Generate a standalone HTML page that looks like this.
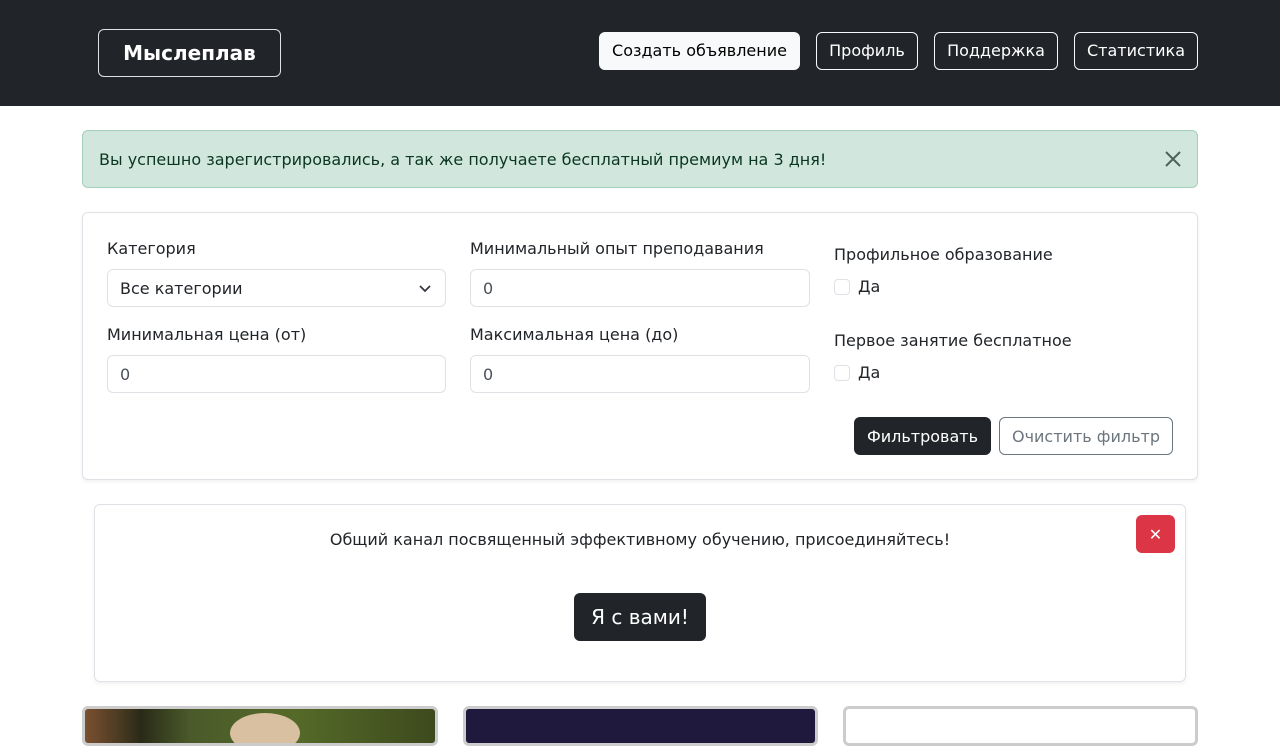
<!DOCTYPE html>
<html><head><meta charset="utf-8"><style>
*{box-sizing:border-box;margin:0;padding:0}
body{width:1280px;height:720px;overflow:hidden;background:#fff;font-family:"DejaVu Sans","Liberation Sans",sans-serif;font-size:16px;color:#212529;position:relative}
.abs{position:absolute}
.nav{left:0;top:0;width:1280px;height:106px;background:#212529}
.brand{left:98px;top:29px;width:183px;height:48px;border:1px solid #dee2e6;border-radius:6px;color:#fff;font-weight:bold;font-size:20px;display:flex;align-items:center;justify-content:center}
.nb{top:32px;height:38px;border:1px solid #f8f9fa;border-radius:6px;color:#fff;display:flex;align-items:center;justify-content:center;font-size:16px;padding-bottom:2px}
.alert{left:82px;top:130px;width:1116px;height:58px;background:#d1e7dd;border:1px solid #a3cfbb;border-radius:6px;color:#0a3622;padding:0 16px;display:flex;align-items:center}
.card{border:1px solid #dee2e6;border-radius:6px;box-shadow:0 2px 4px rgba(0,0,0,.06)}
.lbl{font-size:16px}
.inp{height:38px;border:1px solid #dee2e6;border-radius:6px;padding:0 12px;display:flex;align-items:center;color:#495057}
.cb{width:16px;height:16px;border:1px solid #dee2e6;border-radius:4px}
.btn{border-radius:6px;display:flex;align-items:center;justify-content:center}
</style></head><body>
<div class="abs nav"></div>
<div class="abs brand">Мыслеплав</div>
<div class="abs nb" style="left:599px;width:201px;background:#f8f9fa;color:#000">Создать объявление</div>
<div class="abs nb" style="left:816px;width:102px">Профиль</div>
<div class="abs nb" style="left:934px;width:124px">Поддержка</div>
<div class="abs nb" style="left:1074px;width:124px">Статистика</div>

<div class="abs alert">Вы успешно зарегистрировались, а так же получаете бесплатный премиум на 3 дня!</div>
<svg class="abs" style="left:1164px;top:150px" width="18" height="18" viewBox="0 0 18 18"><path d="M2 2L16 16M16 2L2 16" stroke="#50605a" stroke-width="2"/></svg>

<div class="abs card" style="left:82px;top:212px;width:1116px;height:268px"></div>
<div class="abs lbl" style="left:107px;top:239px">Категория</div>
<div class="abs inp" style="left:107px;top:269px;width:339px;color:#212529">Все категории</div>
<svg class="abs" style="left:418px;top:282px" width="14" height="12" viewBox="0 0 14 12"><path d="M2 4l5 5 5-5" fill="none" stroke="#343a40" stroke-width="1.8"/></svg>
<div class="abs lbl" style="left:470px;top:239px">Минимальный опыт преподавания</div>
<div class="abs inp" style="left:470px;top:269px;width:340px">0</div>
<div class="abs lbl" style="left:107px;top:325px">Минимальная цена (от)</div>
<div class="abs inp" style="left:107px;top:355px;width:339px">0</div>
<div class="abs lbl" style="left:470px;top:325px">Максимальная цена (до)</div>
<div class="abs inp" style="left:470px;top:355px;width:340px">0</div>
<div class="abs lbl" style="left:834px;top:245px">Профильное образование</div>
<div class="abs cb" style="left:834px;top:279px"></div>
<div class="abs" style="left:858px;top:277px">Да</div>
<div class="abs lbl" style="left:834px;top:331px">Первое занятие бесплатное</div>
<div class="abs cb" style="left:834px;top:365px"></div>
<div class="abs" style="left:858px;top:363px">Да</div>
<div class="abs btn" style="left:854px;top:417px;width:137px;height:38px;background:#212529;color:#fff">Фильтровать</div>
<div class="abs btn" style="left:999px;top:417px;width:174px;height:38px;border:1px solid #6c757d;color:#6c757d">Очистить фильтр</div>

<div class="abs card" style="left:94px;top:504px;width:1092px;height:178px"></div>
<div class="abs" style="left:94px;top:530px;width:1092px;text-align:center">Общий канал посвященный эффективному обучению, присоединяйтесь!</div>
<div class="abs btn" style="left:1136px;top:515px;width:39px;height:38px;background:#dc3545;color:#fff;font-size:16px">✕</div>
<div class="abs btn" style="left:574px;top:593px;width:132px;height:48px;background:#212529;color:#fff;font-size:20px">Я с вами!</div>

<div class="abs" style="left:82px;top:706px;width:356px;height:40px;border:3px solid #ccc;border-radius:6px;overflow:hidden;background:linear-gradient(90deg,#7a5030,#4a3a22 10%,#2a2a18 16%,#4a5a2a 30%,#556a28 60%,#3d4a1e 100%)">
<div style="position:absolute;left:145px;top:4px;width:70px;height:40px;border-radius:50%;background:#d8c0a0"></div></div>
<div class="abs" style="left:463px;top:706px;width:355px;height:40px;border:3px solid #ccc;border-radius:6px;background:#1f1a3d"></div>
<div class="abs" style="left:843px;top:706px;width:355px;height:40px;border:3px solid #ccc;border-radius:6px;background:#fff"></div>
</body></html>
